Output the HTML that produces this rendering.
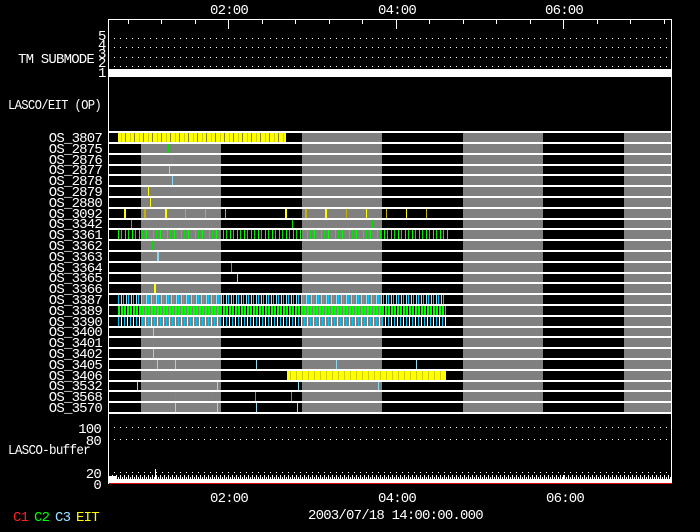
<!DOCTYPE html>
<html><head><meta charset="utf-8"><style>
html,body{margin:0;padding:0;background:#000;width:700px;height:532px;overflow:hidden}
svg{display:block}
text{font-family:"Liberation Mono",monospace;font-size:14px;letter-spacing:-0.8px;fill:#fff}
</style></head><body>
<svg width="700" height="532" viewBox="0 0 700 532" xmlns="http://www.w3.org/2000/svg" shape-rendering="crispEdges">
<defs>
<pattern id="yel" x="118" y="0" width="9" height="20" patternUnits="userSpaceOnUse">
<rect width="9" height="20" fill="#ffff00"/><rect x="3" width="1" height="20" fill="#d0d000"/><rect x="7" width="1" height="20" fill="#888800"/>
</pattern>
<pattern id="yel2" x="287" y="0" width="6" height="20" patternUnits="userSpaceOnUse">
<rect width="6" height="20" fill="#ffff00"/><rect x="3" width="1" height="20" fill="#d0d000"/>
</pattern>
<pattern id="grn" x="118" y="0" width="7" height="20" patternUnits="userSpaceOnUse">
<rect x="0" width="1" height="20" fill="#00ff00"/><rect x="3" width="1" height="20" fill="#00e000"/>
</pattern>
<pattern id="cy" x="118" y="0" width="5" height="20" patternUnits="userSpaceOnUse">
<rect x="0" width="1" height="20" fill="#00c8ff"/><rect x="3" width="1" height="20" fill="#9ae0ff"/>
</pattern>
<pattern id="g2" x="118" y="0" width="3" height="20" patternUnits="userSpaceOnUse">
<rect x="0" width="2" height="20" fill="#00ff00"/>
</pattern>
<pattern id="cy2" x="118" y="0" width="6" height="20" patternUnits="userSpaceOnUse">
<rect x="0" width="1" height="20" fill="#00c8ff"/><rect x="3" width="1" height="20" fill="#ffffff"/>
</pattern>
<pattern id="dot" x="114" y="0" width="6" height="1" patternUnits="userSpaceOnUse">
<rect width="1" height="1" fill="#fff"/>
</pattern>
<pattern id="buf" x="110" y="473" width="4" height="10" patternUnits="userSpaceOnUse">
<rect x="0" y="4" width="1" height="6" fill="#fff"/><rect x="2" y="2" width="1" height="8" fill="#fff"/><rect x="3" y="6" width="1" height="4" fill="#fff"/>
</pattern>
</defs>

<text x="210" y="14">02:00</text>
<text x="378" y="14">04:00</text>
<text x="545" y="14">06:00</text>

<rect x="108.5" y="19.5" width="563" height="464" fill="none" stroke="#fff" stroke-width="1"/>
<g stroke="#fff" stroke-width="1">
<line x1="128.5" y1="20" x2="128.5" y2="24"/><line x1="161.5" y1="20" x2="161.5" y2="24"/><line x1="195.5" y1="20" x2="195.5" y2="24"/><line x1="228.5" y1="20" x2="228.5" y2="29"/>
<line x1="262.5" y1="20" x2="262.5" y2="24"/><line x1="295.5" y1="20" x2="295.5" y2="24"/><line x1="329.5" y1="20" x2="329.5" y2="24"/><line x1="396.5" y1="20" x2="396.5" y2="29"/>
<line x1="362.5" y1="20" x2="362.5" y2="24"/><line x1="429.5" y1="20" x2="429.5" y2="24"/><line x1="463.5" y1="20" x2="463.5" y2="24"/><line x1="496.5" y1="20" x2="496.5" y2="24"/>
<line x1="530.5" y1="20" x2="530.5" y2="24"/><line x1="563.5" y1="20" x2="563.5" y2="29"/><line x1="597.5" y1="20" x2="597.5" y2="24"/><line x1="630.5" y1="20" x2="630.5" y2="24"/><line x1="664.5" y1="20" x2="664.5" y2="24"/>
</g>

<rect x="110" y="38" width="560" height="1" fill="url(#dot)"/>
<rect x="110" y="47" width="560" height="1" fill="url(#dot)"/>
<rect x="110" y="57" width="560" height="1" fill="url(#dot)"/>
<rect x="110" y="66" width="560" height="1" fill="url(#dot)"/>
<rect x="109" y="69" width="562" height="8" fill="#fff"/>
<text x="18" y="63" textLength="76" lengthAdjust="spacingAndGlyphs">TM SUBMODE</text>
<text x="98" y="40" font-size="12">5</text>
<text x="98" y="49" font-size="12">4</text>
<text x="98" y="58" font-size="12">3</text>
<text x="98" y="67" font-size="12">2</text>
<text x="98" y="77" font-size="12">1</text>
<text x="8" y="109" textLength="93" lengthAdjust="spacingAndGlyphs">LASCO/EIT (OP)</text>

<g fill="#808080">
<rect x="141" y="143" width="80" height="270"/>
<rect x="302" y="132" width="80" height="281"/>
<rect x="463" y="132" width="80" height="281"/>
<rect x="624" y="132" width="47" height="281"/>
</g>

<rect x="118" y="133" width="168" height="9.5" fill="url(#yel)"/>
<g fill="#00e000">
<rect x="168" y="144" width="1" height="10"/><rect x="171" y="155" width="1" height="10"/>
<rect x="131" y="220" width="1" height="9"/><rect x="211" y="220" width="1" height="9"/><rect x="292" y="220" width="1" height="9"/><rect x="372" y="220" width="1" height="9"/>
<rect x="151" y="241" width="2" height="9"/><rect x="231" y="263" width="1" height="9"/>
<rect x="153" y="339" width="1" height="9"/>
<rect x="175" y="392" width="1" height="10"/><rect x="211" y="392" width="1" height="10"/><rect x="255" y="392" width="1" height="10"/><rect x="291" y="392" width="1" height="10"/>
</g>
<g fill="#90d8f0">
<rect x="169" y="165" width="1" height="10"/><rect x="172" y="176" width="1" height="10"/>
<rect x="157" y="252" width="2" height="9"/><rect x="237" y="273" width="1" height="9"/>
<rect x="153" y="328" width="1" height="9"/><rect x="153" y="349" width="1" height="9"/>
<rect x="157" y="360" width="1" height="10"/><rect x="175" y="360" width="1" height="10"/><rect x="256" y="360" width="1" height="10"/><rect x="336" y="360" width="1" height="10"/><rect x="416" y="360" width="1" height="10"/>
<rect x="137" y="381" width="1" height="10"/><rect x="217" y="381" width="1" height="10"/><rect x="298" y="381" width="1" height="10"/><rect x="378" y="381" width="1" height="10"/>
<rect x="175" y="403" width="1" height="10"/><rect x="217" y="403" width="1" height="10"/><rect x="256" y="403" width="1" height="10"/><rect x="297" y="403" width="1" height="10"/>
</g>
<g fill="#ffff00">
<rect x="148" y="187" width="1" height="10"/><rect x="150" y="198" width="1" height="10"/>
<rect x="124" y="209" width="2" height="9"/><rect x="144" y="209" width="2" height="9" fill="#c8b000"/><rect x="165" y="209" width="2" height="9"/>
<rect x="185" y="209" width="1" height="9" fill="#c8b000"/><rect x="205" y="209" width="1" height="9" fill="#c8b000"/><rect x="225" y="209" width="1" height="9" fill="#c8b000"/>
<rect x="285" y="209" width="2" height="9"/><rect x="305" y="209" width="2" height="9" fill="#c8b000"/><rect x="325" y="209" width="2" height="9"/><rect x="346" y="209" width="1" height="9" fill="#c8b000"/><rect x="366" y="209" width="1" height="9"/><rect x="386" y="209" width="1" height="9" fill="#c8b000"/><rect x="406" y="209" width="1" height="9"/><rect x="426" y="209" width="1" height="9" fill="#c8b000"/>
<rect x="154" y="284" width="2" height="9"/>
</g>
<rect x="118" y="230" width="330" height="9.5" fill="url(#grn)"/>
<rect x="118" y="295" width="328" height="9.5" fill="url(#cy)"/>
<rect x="118" y="306" width="328" height="9.5" fill="url(#g2)"/>
<rect x="118" y="317" width="328" height="9.5" fill="url(#cy2)"/>
<rect x="287" y="371" width="159" height="10" fill="url(#yel2)"/>

<g fill="#fff">
<rect x="108" y="131" width="564" height="2"/><rect x="108" y="142" width="564" height="2"/><rect x="108" y="153" width="564" height="2"/><rect x="108" y="164" width="564" height="2"/>
<rect x="108" y="174" width="564" height="2"/><rect x="108" y="185" width="564" height="2"/><rect x="108" y="196" width="564" height="2"/><rect x="108" y="207" width="564" height="2"/>
<rect x="108" y="218" width="564" height="2"/><rect x="108" y="228" width="564" height="2"/><rect x="108" y="239" width="564" height="2"/><rect x="108" y="250" width="564" height="2"/>
<rect x="108" y="261" width="564" height="2"/><rect x="108" y="272" width="564" height="2"/><rect x="108" y="282" width="564" height="2"/><rect x="108" y="293" width="564" height="2"/>
<rect x="108" y="304" width="564" height="2"/><rect x="108" y="315" width="564" height="2"/><rect x="108" y="326" width="564" height="2"/><rect x="108" y="336" width="564" height="2"/>
<rect x="108" y="347" width="564" height="2"/><rect x="108" y="358" width="564" height="2"/><rect x="108" y="369" width="564" height="2"/><rect x="108" y="380" width="564" height="2"/>
<rect x="108" y="390" width="564" height="2"/><rect x="108" y="401" width="564" height="2"/><rect x="108" y="412" width="564" height="2"/>
</g>

<g text-anchor="end">
<text x="102" y="142">OS_3807</text><text x="102" y="153">OS_2875</text><text x="102" y="164">OS_2876</text><text x="102" y="174">OS_2877</text>
<text x="102" y="185">OS_2878</text><text x="102" y="196">OS_2879</text><text x="102" y="207">OS_2880</text><text x="102" y="218">OS_3092</text>
<text x="102" y="228">OS_3342</text><text x="102" y="239">OS_3361</text><text x="102" y="250">OS_3362</text><text x="102" y="261">OS_3363</text>
<text x="102" y="272">OS_3364</text><text x="102" y="282">OS_3365</text><text x="102" y="293">OS_3366</text><text x="102" y="304">OS_3387</text>
<text x="102" y="315">OS_3389</text><text x="102" y="326">OS_3390</text><text x="102" y="336">OS_3400</text><text x="102" y="347">OS_3401</text>
<text x="102" y="358">OS_3402</text><text x="102" y="369">OS_3405</text><text x="102" y="380">OS_3406</text><text x="102" y="390">OS_3532</text>
<text x="102" y="401">OS_3568</text><text x="102" y="412">OS_3570</text>
</g>

<rect x="110" y="427" width="560" height="1" fill="url(#dot)"/>
<rect x="110" y="439" width="560" height="1" fill="url(#dot)"/>
<rect x="110" y="472" width="560" height="1" fill="url(#dot)"/>
<text x="101" y="433" text-anchor="end">100</text>
<text x="101" y="445" text-anchor="end">80</text>
<text x="8" y="454" textLength="82" lengthAdjust="spacingAndGlyphs">LASCO-buffer</text>
<text x="101" y="478" text-anchor="end">20</text>
<text x="101" y="489" text-anchor="end">0</text>
<rect x="109" y="476" width="8" height="7" fill="#fff"/>
<rect x="110" y="473" width="562" height="10" fill="url(#buf)"/>
<rect x="117" y="479" width="555" height="4" fill="#fff"/>
<rect x="155" y="469" width="1" height="14" fill="#fff"/>
<rect x="228" y="475" width="1" height="8" fill="#fff"/>
<rect x="109" y="483" width="563" height="1" fill="#e00000"/>
<g stroke="#fff" stroke-width="1">
<line x1="563.5" y1="475" x2="563.5" y2="483"/>
<line x1="597.5" y1="479" x2="597.5" y2="483"/><line x1="630.5" y1="479" x2="630.5" y2="483"/><line x1="664.5" y1="479" x2="664.5" y2="483"/>
</g>

<text x="210" y="502">02:00</text>
<text x="378" y="502">04:00</text>
<text x="546" y="502">06:00</text>
<text x="308" y="519">2003/07/18 14:00:00.000</text>

<g font-size="11">
<text x="13" y="521" style="fill:#ff2020">C1</text>
<text x="34" y="521" style="fill:#00ff00">C2</text>
<text x="55" y="521" style="fill:#a0e0ff">C3</text>
<text x="76" y="521" style="fill:#ffff00">EIT</text>
</g>
</svg>
</body></html>
